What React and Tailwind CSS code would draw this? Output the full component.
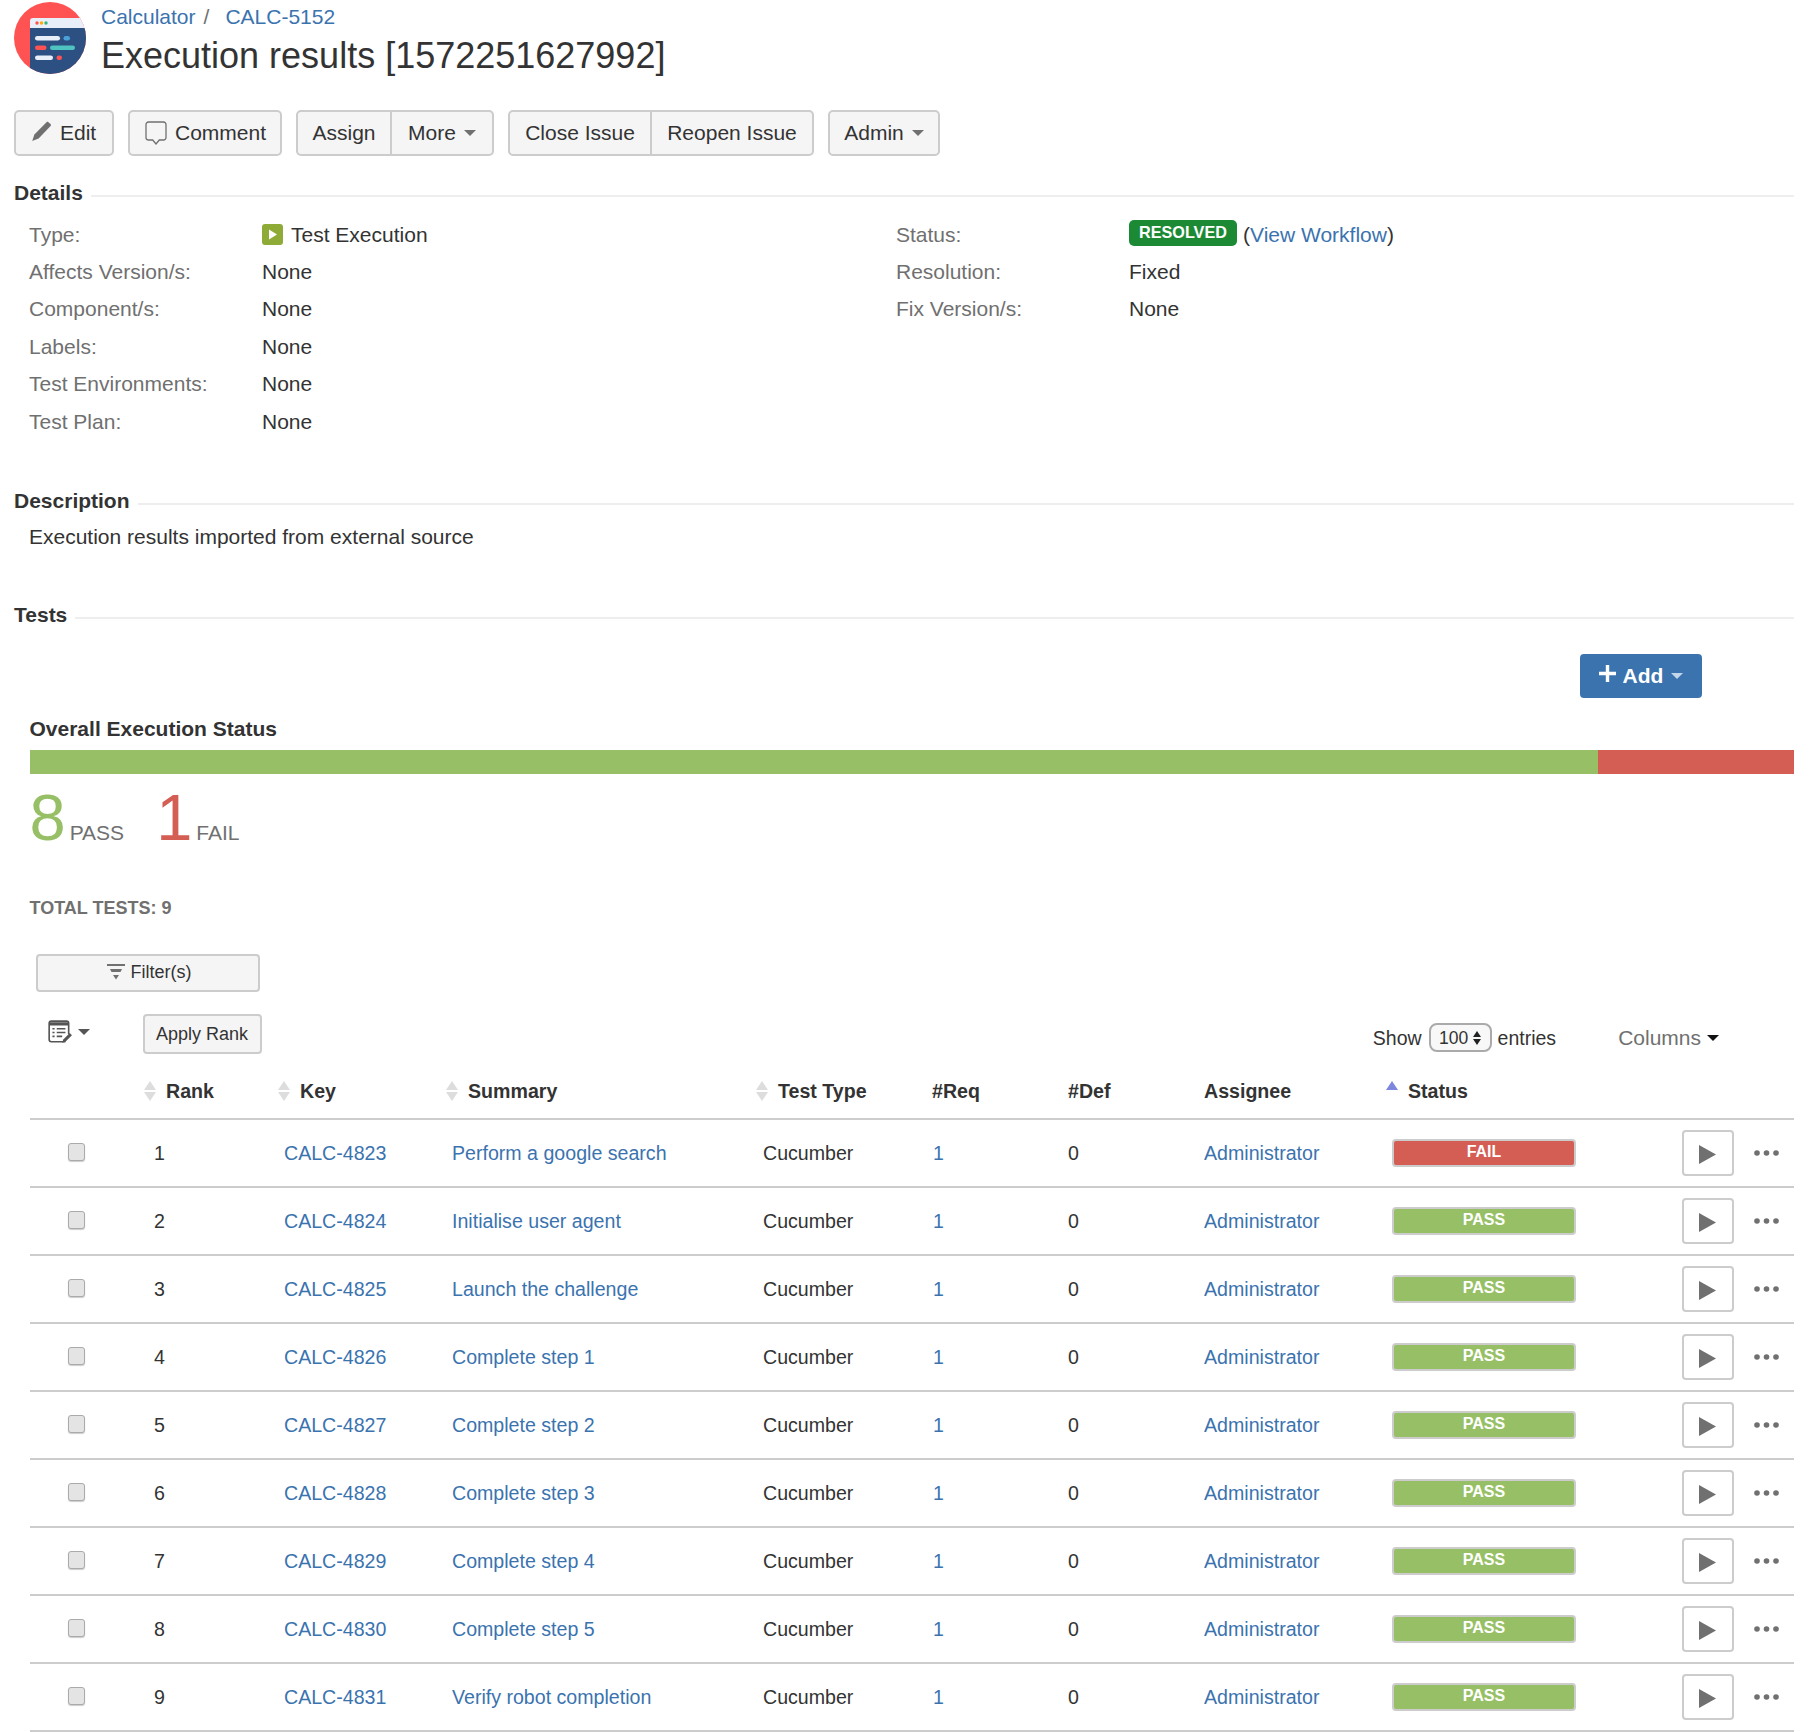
import React from 'react';

const rows = [
  { rank: 1, key: 'CALC-4823', summary: 'Perform a google search', status: 'FAIL' },
  { rank: 2, key: 'CALC-4824', summary: 'Initialise user agent', status: 'PASS' },
  { rank: 3, key: 'CALC-4825', summary: 'Launch the challenge', status: 'PASS' },
  { rank: 4, key: 'CALC-4826', summary: 'Complete step 1', status: 'PASS' },
  { rank: 5, key: 'CALC-4827', summary: 'Complete step 2', status: 'PASS' },
  { rank: 6, key: 'CALC-4828', summary: 'Complete step 3', status: 'PASS' },
  { rank: 7, key: 'CALC-4829', summary: 'Complete step 4', status: 'PASS' },
  { rank: 8, key: 'CALC-4830', summary: 'Complete step 5', status: 'PASS' },
  { rank: 9, key: 'CALC-4831', summary: 'Verify robot completion', status: 'PASS' },
];

const leftDetails = [
  { label: 'Affects Version/s:', value: 'None' },
  { label: 'Component/s:', value: 'None' },
  { label: 'Labels:', value: 'None' },
  { label: 'Test Environments:', value: 'None' },
  { label: 'Test Plan:', value: 'None' },
];

const tableCols = 'grid grid-cols-[114px_134px_168px_310px_176px_136px_136px_182px_296px_112px] items-center';

const Logo = () => (
  <svg width="72" height="72" viewBox="0 0 72 72" className="shrink-0">
    <defs>
      <clipPath id="logo-clip"><circle cx="36" cy="36" r="36" /></clipPath>
    </defs>
    <g clipPath="url(#logo-clip)">
      <rect width="72" height="72" fill="#ff5252" />
      <path d="M16 19a3 3 0 0 1 3-3h53v10H16z" fill="#e9eff8" />
      <rect x="16" y="26" width="56" height="46" fill="#2b5081" />
      <circle cx="23" cy="21" r="1.7" fill="#ff5252" />
      <circle cx="27.5" cy="21" r="1.7" fill="#ffab00" />
      <circle cx="32" cy="21" r="1.7" fill="#36b37e" />
      <rect x="21" y="34" width="25" height="4.6" rx="2.3" fill="#e9eff8" />
      <rect x="49.5" y="34" width="6.5" height="4.6" rx="2.3" fill="#4c9fd9" />
      <rect x="21" y="43.5" width="11.5" height="4.6" rx="2.3" fill="#ff5252" />
      <rect x="36" y="43.5" width="25" height="4.6" rx="2.3" fill="#4fc3c0" />
      <rect x="21" y="53.5" width="18" height="4.6" rx="2.3" fill="#e9eff8" />
      <rect x="42.5" y="53.5" width="5.5" height="4.6" rx="2.3" fill="#ff5252" />
    </g>
  </svg>
);

const Caret = ({ className = 'border-t-[#707070]' }) => (
  <span className={`inline-block w-0 h-0 border-x-[6px] border-x-transparent border-t-[6px] ${className}`} />
);

const Pencil = () => (
  <svg width="21" height="21" viewBox="0 0 21 21" className="shrink-0 mb-[3px]">
    <path d="M15.5 1.2c.6-.5 1.4-.5 2 0l2 1.9c.6.6.6 1.4.1 2L7.6 17.6 1.2 20l2.200-6.600z" fill="#707070" />
  </svg>
);

const Bubble = () => (
  <svg width="22" height="24" viewBox="0 0 22 24" fill="none" className="shrink-0">
    <path d="M3.5 1h15A2.5 2.5 0 0 1 21 3.5v13a2.5 2.5 0 0 1-2.5 2.5h-4.2L11 23l-3.3-4H3.500A2.500 2.500 0 0 1 1 16.500v-13A2.500 2.500 0 0 1 3.500 1z" stroke="#707070" strokeWidth="1.300" />
  </svg>
);

const ToolButton = ({ children, className = '' }) => (
  <button className={`h-[46px] flex items-center gap-[8px] bg-[#f5f5f5] border-2 border-[#ccc] rounded-[5px] text-[#333] ${className}`}>
    {children}
  </button>
);

const SectionHead = ({ title, className = '' }) => (
  <div className={`flex items-center h-[24px] ${className}`}>
    <h2 className="font-bold text-[21px] leading-[24px] text-[#333] mr-[8px]">{title}</h2>
    <div className="flex-1 h-[2px] mt-[6px] bg-[#eee]" />
  </div>
);

const DetailRow = ({ label, children }) => (
  <div className="flex items-center h-[37.4px] pl-[15px]">
    <span className="w-[233px] text-[#707070]">{label}</span>
    <span className="text-[#333] flex items-center">{children}</span>
  </div>
);

const SortArrows = () => (
  <span className="inline-flex flex-col gap-[2px] w-[12px] shrink-0">
    <span className="w-0 h-0 border-x-[6px] border-x-transparent border-b-[9px] border-b-[#ddd]" />
    <span className="w-0 h-0 border-x-[6px] border-x-transparent border-t-[9px] border-t-[#ddd]" />
  </span>
);

const HeadCell = ({ children }) => (
  <div className="flex items-center gap-[10px] font-bold text-[#333]">
    <SortArrows />
    <span>{children}</span>
  </div>
);

const App = () => {
  return (
    <div className="w-[1818px] h-[1732px] overflow-hidden bg-white pl-[14px] pr-[24px] font-['Liberation_Sans',Arial,sans-serif] text-[21px] leading-[24px] text-[#333]">
      {/* issue header */}
      <div className="flex h-[110px] pt-[2px]">
        <Logo />
        <div className="ml-[15px]">
          <div className="flex h-[30px] items-center text-[#3b73af]">
            <a>Calculator</a>
            <span className="text-[#707070] ml-[8px] mr-[16px]">/</span>
            <a>CALC-5152</a>
          </div>
          <h1 className="text-[36px] leading-[44px] mt-[2px] text-[#333]">Execution results [1572251627992]</h1>
        </div>
      </div>

      {/* toolbar */}
      <div className="flex gap-[14px] h-[46px]">
        <ToolButton className="w-[100px] pl-[15px]"><Pencil /><span>Edit</span></ToolButton>
        <ToolButton className="w-[154px] pl-[15px]"><Bubble /><span>Comment</span></ToolButton>
        <div className="flex">
          <ToolButton className="w-[96px] justify-center rounded-r-none">Assign</ToolButton>
          <ToolButton className="w-[102px] justify-center rounded-l-none border-l-0">More <Caret /></ToolButton>
        </div>
        <div className="flex">
          <ToolButton className="w-[144px] justify-center rounded-r-none">Close Issue</ToolButton>
          <ToolButton className="w-[162px] justify-center rounded-l-none border-l-0">Reopen Issue</ToolButton>
        </div>
        <ToolButton className="w-[112px] justify-center">Admin <Caret /></ToolButton>
      </div>

      <SectionHead title="Details" className="mt-[25px]" />
      <div className="flex mt-[11px] h-[225.6px]">
        <div className="w-[867px]">
          <DetailRow label="Type:">
            <svg width="21" height="21" viewBox="0 0 21 21" className="mr-[8px]">
              <rect width="21" height="21" rx="3" fill="#8fab37" />
              <path d="M7 5.500l8 5-8 5z" fill="#fff" />
            </svg>
            Test Execution
          </DetailRow>
          {leftDetails.map((d) => (
            <DetailRow key={d.label} label={d.label}>{d.value}</DetailRow>
          ))}
        </div>
        <div className="flex-1">
          <DetailRow label="Status:">
            <span className="h-[26px] w-[108px] mb-[4px] flex items-center justify-center rounded-[5px] bg-[#1c8a34] text-white font-bold text-[16.2px] pb-[2px]">RESOLVED</span>
            <span className="ml-[6px]">(<a className="text-[#3b73af]">View Workflow</a>)</span>
          </DetailRow>
          <DetailRow label="Resolution:">Fixed</DetailRow>
          <DetailRow label="Fix Version/s:">None</DetailRow>
        </div>
      </div>

      <SectionHead title="Description" className="mt-[47.4px]" />
      <p className="mt-[12px] pl-[15px] h-[24px]">Execution results imported from external source</p>

      <SectionHead title="Tests" className="mt-[54px]" />
      <div className="flex justify-end mt-[27px] pr-[92px]">
        <button className="w-[122px] h-[44px] flex items-center justify-center gap-[7px] rounded-[4px] bg-[#3b73af] text-white font-bold">
          <svg width="17" height="17" viewBox="0 0 16 16" className="mb-[5px]"><path d="M6.400 0h3.200v6.400H16v3.200H9.600V16H6.400V9.600H0V6.400h6.400z" fill="#fff" /></svg>
          <span>Add</span>
          <Caret className="border-t-[#c4d6ea] ml-[1px]" />
        </button>
      </div>

      <div className="ml-[15.500px]">
        <h3 className="mt-[19px] h-[24px] font-bold text-[#333]">Overall Execution Status</h3>
        <div className="flex h-[24px] mt-[9px]">
          <div className="w-[1568px] bg-[#97c066]" />
          <div className="flex-1 bg-[#d45d54]" />
        </div>
        <div className="flex items-baseline mt-[11px] h-[65px] text-[#707070]">
          <span className="text-[65px] leading-[65px] text-[#97c066]">8</span>
          <span className="ml-[4px]">PASS</span>
          <span className="text-[65px] leading-[65px] text-[#d45d54] ml-[32px]">1</span>
          <span className="ml-[4px]">FAIL</span>
        </div>
        <p className="mt-[45.600px] h-[24px] font-bold text-[18px] text-[#707070]">TOTAL TESTS: 9</p>

        <button className="mt-[34.400px] ml-[6px] w-[224px] h-[38px] pb-[2px] flex items-center justify-center gap-[6px] bg-[#f5f5f5] border-2 border-[#ccc] rounded-[4px] text-[18px]">
          <svg width="18" height="16" viewBox="0 0 18 16" fill="#707070" className="ml-[3px]">
            <rect width="18" height="2" />
            <path d="M3 5h12l-1.500 3h-9z" />
            <path d="M6 11h6l-3 4.500z" />
          </svg>
          Filter(s)
        </button>

        <div className="flex items-start h-[40px] mt-[22px] text-[19.500px]">
          <div className="flex items-center gap-[5px] mt-[5px] ml-[17px] w-[97px]">
            <svg width="26" height="26" viewBox="0 0 24 24" fill="none" stroke="#555" strokeWidth="1.500">
              <path d="M17 21H4a2 2 0 0 1-2-2V4a2 2 0 0 1 2-2h14a2 2 0 0 1 2 2v10" />
              <path d="M2 4.500h18" strokeWidth="3" />
              <path d="M5 9h2M9 9h8M5 12.500h2M9 12.500h8M5 16h2M9 16h5" />
              <path d="M14 22l1-3 6-6 2 2-6 6z" fill="#555" stroke="none" />
            </svg>
            <Caret className="border-t-[#555]" />
          </div>
          <button className="w-[119px] h-[40px] -ml-[1px] bg-[#f5f5f5] border-2 border-[#ccc] rounded-[4px] text-[18px]">Apply Rank</button>
          <div className="flex items-center ml-auto mt-[9.500px] h-[29px]">
            <span>Show</span>
            <span className="ml-[7px] w-[63px] h-[29px] flex items-center justify-center gap-[5px] bg-[#f8f8f8] border-2 border-[#aaa] rounded-[8px] text-[17.500px]">
              100
              <span className="inline-flex flex-col gap-[2px]">
                <span className="w-0 h-0 border-x-[4px] border-x-transparent border-b-[6px] border-b-[#222]" />
                <span className="w-0 h-0 border-x-[4px] border-x-transparent border-t-[6px] border-t-[#222]" />
              </span>
            </span>
            <span className="ml-[6px]">entries</span>
            <span className="ml-[62px] text-[21px] text-[#707070]">Columns</span>
            <Caret className="border-t-[#111] ml-[6px]" />
            <span className="w-[75px]" />
          </div>
        </div>
      </div>

      {/* tests table */}
      <div className="ml-[16px] text-[19.600px]">
        <div className={`${tableCols} h-[66px] pt-[25px] pb-[15px] box-border border-b-2 border-[#ccc]`}>
          <div />
          <HeadCell>Rank</HeadCell>
          <HeadCell>Key</HeadCell>
          <HeadCell>Summary</HeadCell>
          <HeadCell>Test Type</HeadCell>
          <div className="font-bold">#Req</div>
          <div className="font-bold">#Def</div>
          <div className="font-bold">Assignee</div>
          <div className="flex items-center gap-[10px] font-bold">
            <span className="w-0 h-0 mb-[10px] border-x-[6px] border-x-transparent border-b-[9px] border-b-[#7f86dd]" />
            <span>Status</span>
          </div>
          <div />
        </div>
        {rows.map((r) => (
          <div key={r.rank} className={`${tableCols} h-[68px] box-border border-b-2 border-[#ccc]`}>
            <div className="pl-[38px] pb-[1px]">
              <span className="block w-[17px] h-[18px] rounded-[3px] bg-[#e4e4e4] border border-[#aaa] shadow-[0_1px_1px_rgba(0,0,0,0.2)]" />
            </div>
            <div className="pl-[10px]">{r.rank}</div>
            <a className="pl-[6px] text-[#3b73af]">{r.key}</a>
            <a className="pl-[6px] text-[#3b73af]">{r.summary}</a>
            <div className="pl-[7px]">Cucumber</div>
            <a className="pl-[1px] text-[#3b73af]">1</a>
            <div>0</div>
            <a className="text-[#3b73af]">Administrator</a>
            <div className="pl-[6px]">
              <div className={`w-[184px] h-[28px] flex items-center justify-center pb-[1px] border-2 border-[#ccc] rounded-[4px] text-white font-bold text-[16px] ${r.status === 'FAIL' ? 'bg-[#d45d54]' : 'bg-[#97c066]'}`}>
                {r.status}
              </div>
            </div>
            <div className="flex items-center">
              <button className="w-[52px] h-[46px] flex items-center justify-center border-2 border-[#ccc] rounded-[4px] bg-white pt-[4px]">
                <svg width="18" height="19" viewBox="0 0 18 19"><path d="M0 0l17 9.500L0 19z" fill="#707070" /></svg>
              </button>
              <svg width="25" height="6" viewBox="0 0 25 6" fill="#707070" className="ml-[20px]">
                <circle cx="3" cy="3" r="2.800" />
                <circle cx="12.500" cy="3" r="2.800" />
                <circle cx="22" cy="3" r="2.800" />
              </svg>
            </div>
          </div>
        ))}
      </div>
    </div>
  );
};

export default App;
